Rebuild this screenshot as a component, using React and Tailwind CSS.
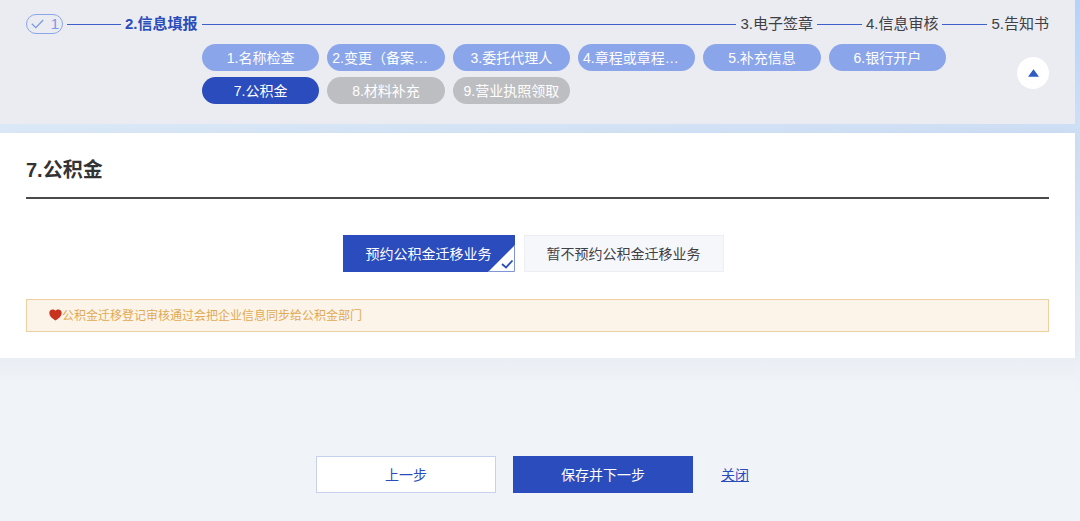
import { useState } from 'react'
import clsx from 'clsx'

const SUB_STEPS = [
  { label: '1.名称检查', state: 'done' },
  { label: '2.变更（备案…', state: 'done', clipped: true },
  { label: '3.委托代理人', state: 'done' },
  { label: '4.章程或章程…', state: 'done', clipped: true },
  { label: '5.补充信息', state: 'done' },
  { label: '6.银行开户', state: 'done' },
  { label: '7.公积金', state: 'current' },
  { label: '8.材料补充', state: 'pending' },
  { label: '9.营业执照领取', state: 'pending' },
]

const PILL_COLORS = {
  done: 'bg-[#8aa5ea]',
  current: 'bg-[#2b4cbc]',
  pending: 'bg-[#bdbec2]',
}

const OPTIONS = ['预约公积金迁移业务', '暂不预约公积金迁移业务']

// ── Icons ────────────────────────────────────────────────────────────────────

function CheckIcon() {
  return (
    <svg className="h-[10px] w-[13px]" viewBox="0 0 13 10" fill="none" stroke="#7b98e4" strokeWidth="1.3">
      <path d="M0.8 4.8 L4.8 8.6 L12.2 1" />
    </svg>
  )
}

function HeartIcon() {
  return (
    <svg className="mb-[2px] h-3 w-[13px] shrink-0" viewBox="0 0 13 12" fill="#c8321f">
      <path d="M6.5 11.6 C4.6 10 0.3 7.6 0.3 3.9 C0.3 1.8 1.7 0.4 3.5 0.4 C4.8 0.4 5.9 0.9 6.5 1.7 C7.1 0.9 8.2 0.4 9.5 0.4 C11.3 0.4 12.7 1.8 12.7 3.9 C12.7 7.6 8.4 10 6.5 11.6 Z" />
    </svg>
  )
}

/** Folded white corner with a tick, shown on the selected option. */
function SelectedCorner() {
  return (
    <svg className="absolute -right-px -bottom-px h-[27px] w-[27px]" viewBox="0 0 27 27" fill="none">
      <path d="M0 27 L27 0 V27 Z" fill="#fff" />
      <path d="M0 26.5 H26.5 V0" stroke="#8094d8" />
      <path d="M14 19 L18 22.5 L24.5 15.5" stroke="#2b4cbc" strokeWidth="1.8" />
    </svg>
  )
}

// ── Header ───────────────────────────────────────────────────────────────────

function StepHeader() {
  const [open, setOpen] = useState(true)

  return (
    <header className="flex min-h-[124px] flex-col bg-[#ebecf1] px-[26px] pt-3">
      <div className="flex h-6 items-center gap-1 text-[15px] leading-6 whitespace-nowrap text-[#3f4045]">
        <div className="flex h-5 w-[37px] items-center justify-between rounded-full border border-[#8aa5ea] pr-[3px] pl-1 text-[#7b98e4]">
          <CheckIcon />
          <span>1</span>
        </div>
        <div className="h-px w-[54px] bg-[#3f5fcb]" />
        <span className="font-bold text-[#2b4cbc]">2.信息填报</span>
        <div className="h-px flex-1 bg-[#3f5fcb]" />
        <span>3.电子签章</span>
        <div className="h-px w-[45px] bg-[#3f5fcb]" />
        <span>4.信息审核</span>
        <div className="h-px w-[45px] bg-[#3f5fcb]" />
        <span>5.告知书</span>
      </div>

      <div className="flex items-start justify-between pt-2 pl-44">
        <div className="grid max-w-[744px] flex-1 grid-cols-6 gap-x-2 gap-y-[6px]">
          {open &&
            SUB_STEPS.map((step) => (
              <button
                key={step.label}
                disabled={step.state === 'pending'}
                className={clsx(
                  'h-[27px] rounded-full px-[5px] text-sm whitespace-nowrap text-white',
                  step.clipped ? 'text-left' : 'text-center',
                  PILL_COLORS[step.state],
                )}
              >
                {step.label}
              </button>
            ))}
        </div>
        <button
          aria-label="收起"
          onClick={() => setOpen(!open)}
          className="mt-[13px] flex h-8 w-8 items-center justify-center rounded-full bg-white"
        >
          <svg className="h-2 w-[11px]" viewBox="0 0 11 8" fill="#2f5bc4">
            <path d="M5.5 0.3 L11 7.7 H0 Z" />
          </svg>
        </button>
      </div>
    </header>
  )
}

// ── Page ─────────────────────────────────────────────────────────────────────

export default function App() {
  const [selected, setSelected] = useState(0)

  return (
    <div className="min-h-screen bg-[#f0f3f8] bg-[linear-gradient(to_bottom,#b3d3fb_0px,#cfe0f6_130px,#e9eff7_300px,#f0f3f8_400px)] pr-[5px] font-['Liberation_Sans','Noto_Sans_CJK_SC',sans-serif]">
      <StepHeader />

      <div className="h-[9px] bg-linear-to-r from-[#dceaf8] to-[#cfdff5]" />

      <main className="bg-white px-[26px] pt-[23px] pb-[26px] shadow-[0_4px_16px_rgba(60,80,120,0.08)]">
        <h1 className="border-b-2 border-[#4a4a4a] pb-[13px] text-xl leading-7 font-bold text-[#333]">
          7.公积金
        </h1>

        <div className="mt-9 flex justify-center">
          {OPTIONS.map((option, i) => (
            <button
              key={option}
              aria-pressed={selected === i}
              onClick={() => setSelected(i)}
              className={clsx(
                'relative mr-[9px] h-[37px] border px-[22px] text-sm',
                selected === i
                  ? 'border-[#2b4cbc] bg-[#2b4cbc] text-white'
                  : 'border-[#eceef3] bg-[#f6f7fb] text-[#3f4045]',
              )}
            >
              {option}
              {selected === i && <SelectedCorner />}
            </button>
          ))}
        </div>

        <p className="mt-[27px] flex h-[33px] items-center border border-[#ecd0a0] bg-[#fdf4e9] px-[22px] text-xs text-[#e0aa55]">
          <HeartIcon />
          <span>公积金迁移登记审核通过会把企业信息同步给公积金部门</span>
        </p>
      </main>

      <footer className="flex items-center justify-center bg-[#f0f3f8] bg-[linear-gradient(to_bottom,#e9eef4,#f0f3f8_24px)] pt-[98px] pr-[10px] pb-7 text-sm">
        <button className="h-[37px] w-[180px] border border-[#c6d1f0] bg-white text-[#2b4cbc]">上一步</button>
        <button className="ml-[17px] h-[37px] w-[180px] bg-[#2b4cbc] text-white">保存并下一步</button>
        <a href="#close" className="ml-7 text-[#2b4cbc] underline">
          关闭
        </a>
      </footer>
    </div>
  )
}
